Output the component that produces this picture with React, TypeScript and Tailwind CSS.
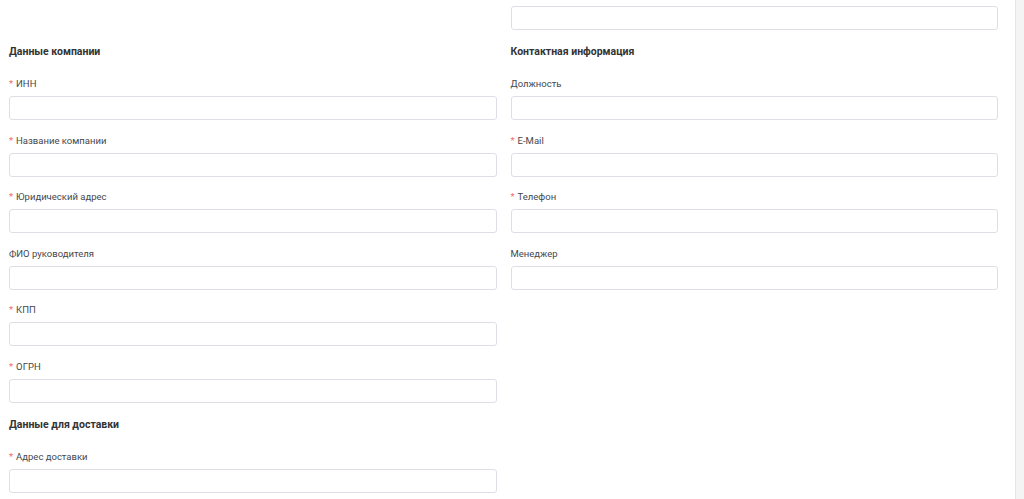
import React from 'react';

type Field = { label: string; required?: boolean };

const companyFields: Field[] = [
  { label: 'ИНН', required: true },
  { label: 'Название компании', required: true },
  { label: 'Юридический адрес', required: true },
  { label: 'ФИО руководителя' },
  { label: 'КПП', required: true },
  { label: 'ОГРН', required: true },
];

const contactFields: Field[] = [
  { label: 'Должность' },
  { label: 'E-Mail', required: true },
  { label: 'Телефон', required: true },
  { label: 'Менеджер' },
];

const deliveryFields: Field[] = [{ label: 'Адрес доставки', required: true }];

function Input() {
  return (
    <input
      type="text"
      className="block w-full h-6 rounded-[3px] border border-[#dcdfe6] bg-white px-2 text-[11px] outline-none"
    />
  );
}

function FormField({ field }: { field: Field }) {
  return (
    <div className="flex flex-col">
      <label className="h-4 leading-4 mt-[1px] mb-[4px] text-[9.5px] text-[#45474b]">
        {field.required && <span className="text-[#f56c6c] mr-[3px]">*</span>}
        {field.label}
      </label>
      <Input />
    </div>
  );
}

function Section({ title, fields }: { title: string; fields: Field[] }) {
  return (
    <div className="flex flex-col">
      <h3 className="mt-[14px] mb-[15px] h-4 leading-4 text-[10.5px] font-bold text-[#333333]">{title}</h3>
      <div className="flex flex-col gap-[11.5px]">
        {fields.map((f) => (
          <FormField key={f.label} field={f} />
        ))}
      </div>
    </div>
  );
}

export default function App() {
  return (
    <div className="flex h-screen overflow-hidden bg-white" style={{ fontFamily: 'Roboto, "Noto Sans", sans-serif' }}>
      <main className="flex-1 pl-[9px] pr-[17px]">
        <div className="grid grid-cols-2 gap-x-[14px]">
          <div />
          <div className="pt-[6px]">
            <Input />
          </div>

          <div className="flex flex-col">
            <Section title="Данные компании" fields={companyFields} />
            <Section title="Данные для доставки" fields={deliveryFields} />
          </div>

          <div className="flex flex-col">
            <Section title="Контактная информация" fields={contactFields} />
          </div>
        </div>
      </main>
      {/* scrollbar track */}
      <div className="w-[9px] h-full bg-[#f4f4f4] border-l border-[#e6e6e6]" />
    </div>
  );
}
